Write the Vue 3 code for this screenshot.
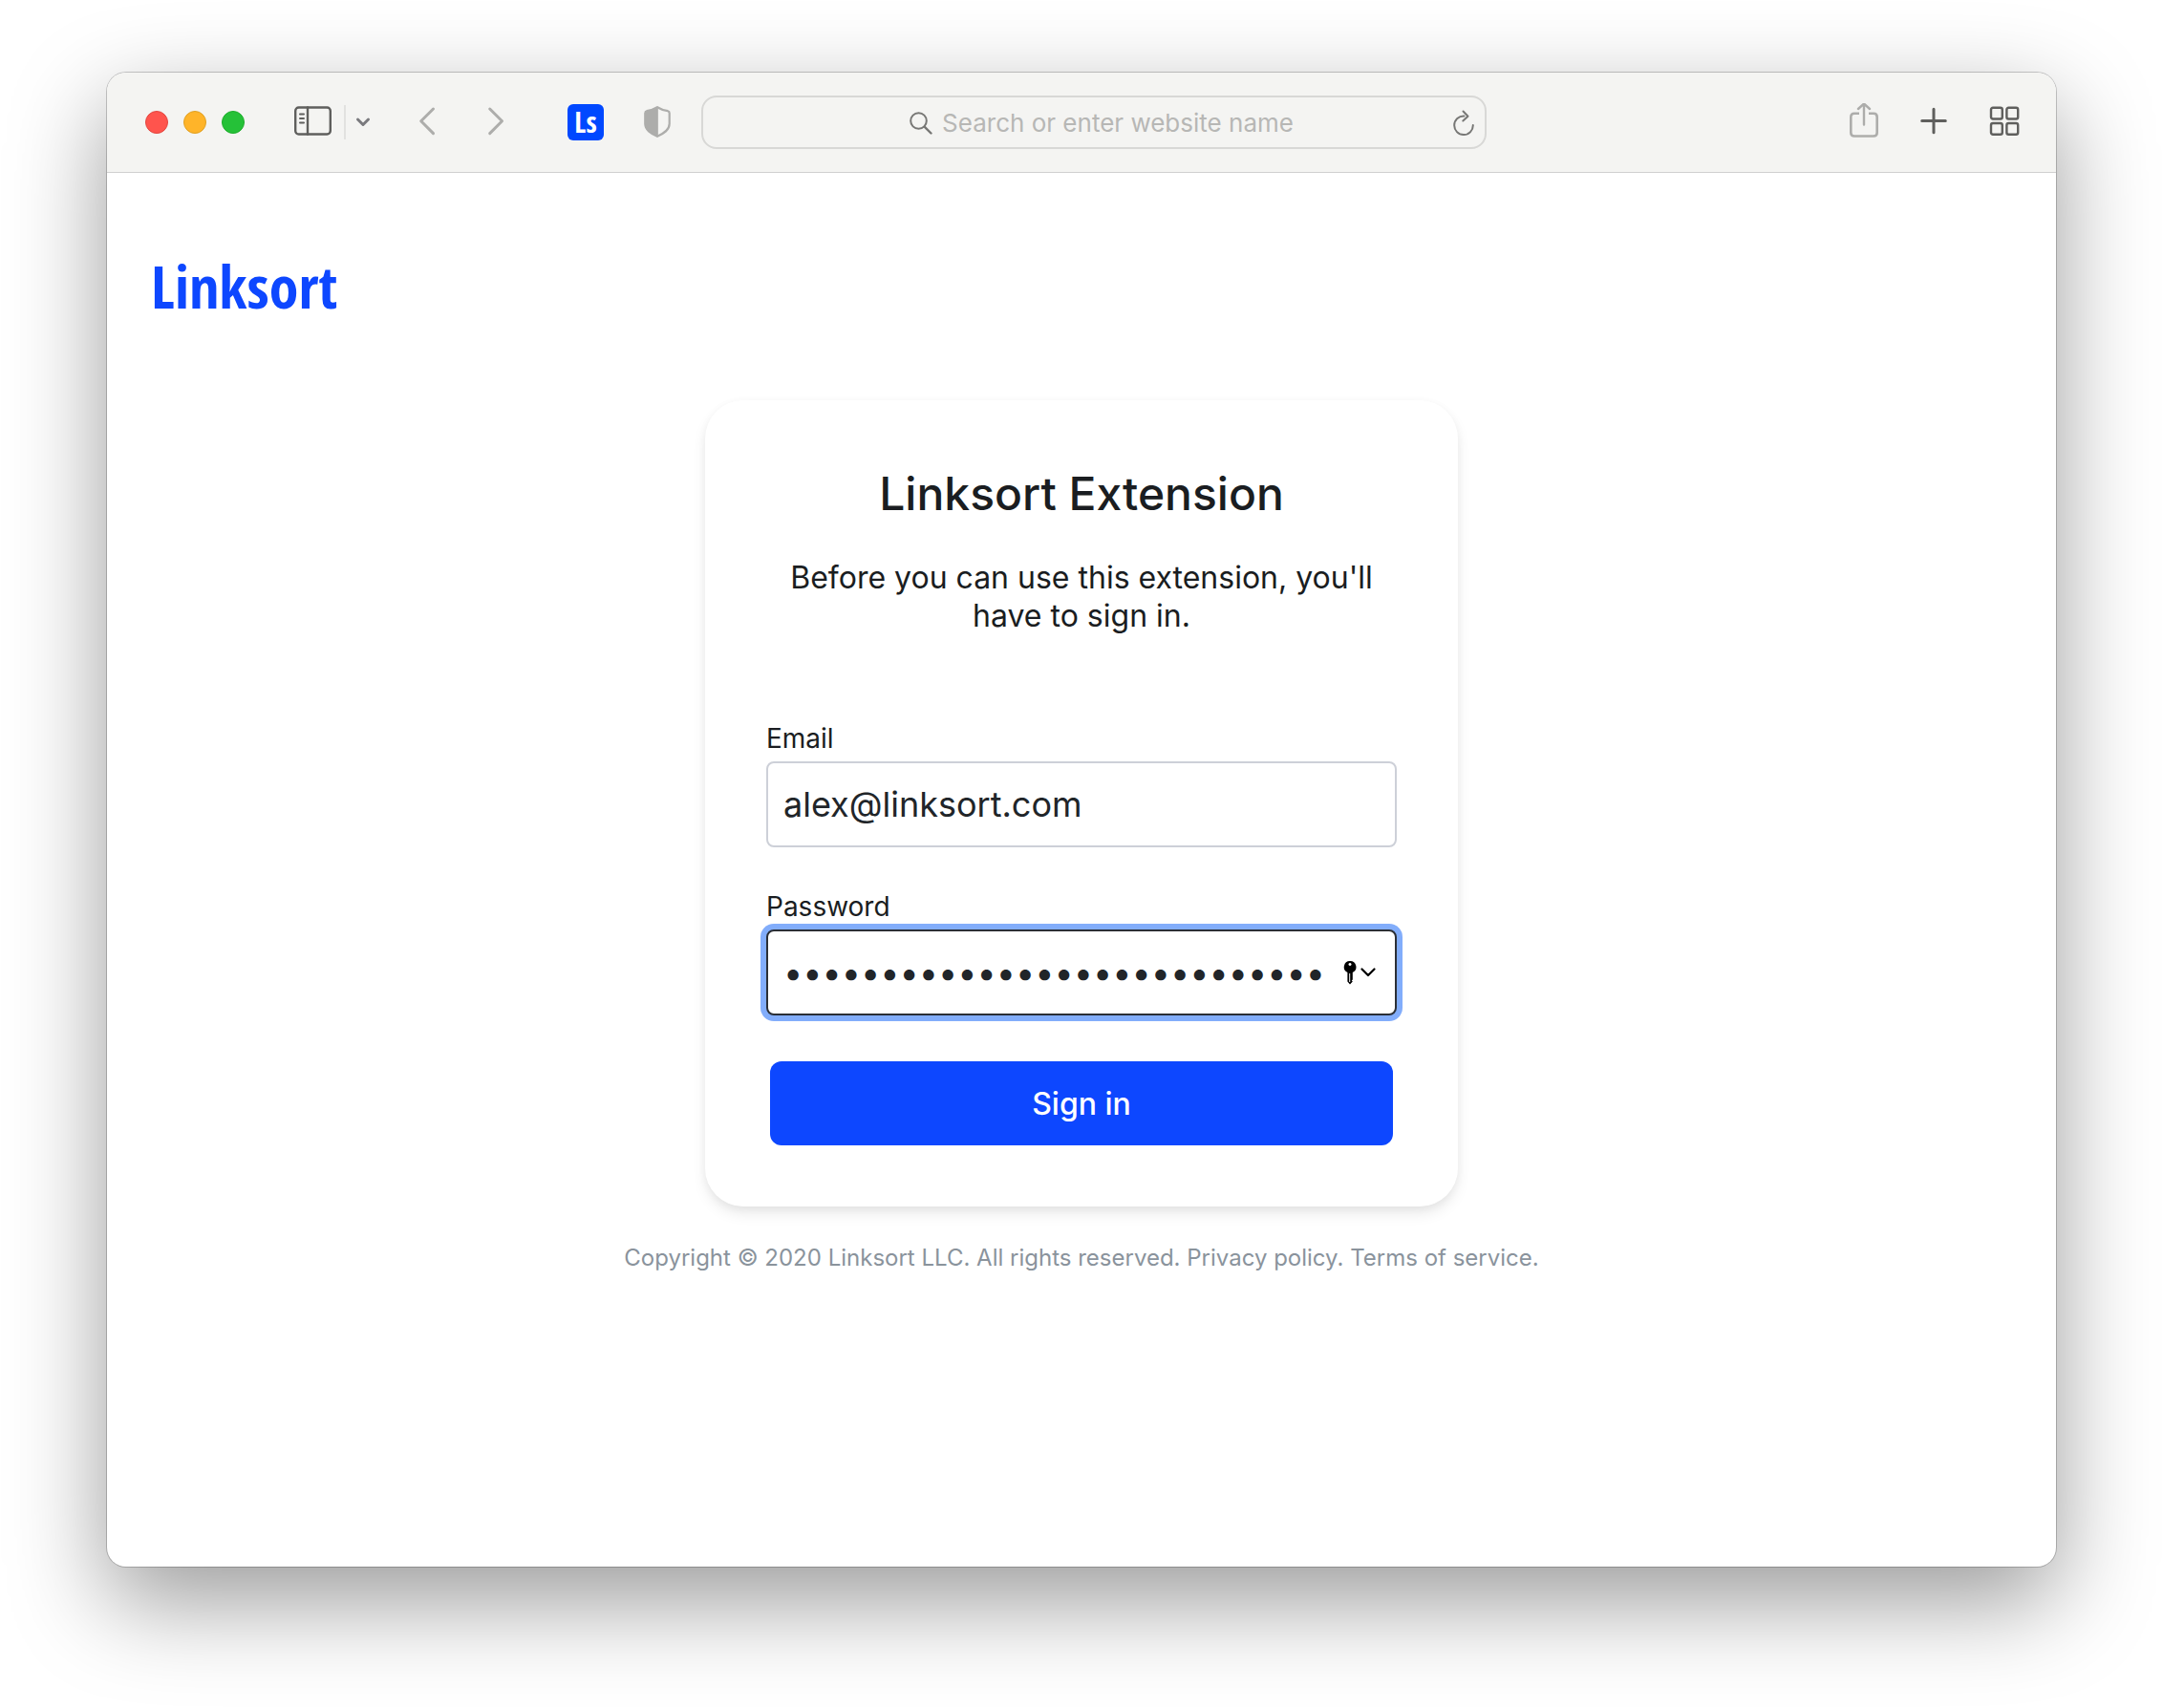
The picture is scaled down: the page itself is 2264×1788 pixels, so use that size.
<script setup>
import { ref } from 'vue'

const address = ref('')
const email = ref('alex@linksort.com')
const password = ref('correct-horse-battery-staple')
</script>

<template>
  <div class="desktop">
    <div class="window">
      <header class="toolbar">
        <div class="lights">
          <button type="button" class="light close" aria-label="Close"></button>
          <button type="button" class="light minimize" aria-label="Minimize"></button>
          <button type="button" class="light zoom" aria-label="Zoom"></button>
        </div>

        <div class="sidebar-group">
          <button type="button" class="tool dark" aria-label="Show sidebar">
            <svg width="40" height="40" viewBox="0 0 40 40">
              <rect x="1.2" y="4.5" width="36.600" height="28" rx="3.500" stroke-width="2.400" />
              <path d="M14 4.500V32.500" stroke-width="2.400" />
              <path d="M6 11.500h4M6 16h4M6 20.500h4" stroke-width="2" />
            </svg>
          </button>
          <span class="divider"></span>
          <button type="button" class="tool slate" aria-label="Sidebar options">
            <svg width="16" height="40" viewBox="0 0 16 40">
              <path d="M2.500 17L8 22.500l5.500-5.500" stroke-width="3" />
            </svg>
          </button>
        </div>

        <div class="history">
          <button type="button" class="tool light-gray" aria-label="Back">
            <svg width="18" height="40" viewBox="0 0 18 40">
              <path d="M15.500 6L2.700 18.800 15.500 31.600" stroke-width="3" />
            </svg>
          </button>
          <button type="button" class="tool light-gray" aria-label="Forward">
            <svg width="18" height="40" viewBox="0 0 18 40">
              <path d="M2.700 6L15.500 18.800 2.700 31.600" stroke-width="3" />
            </svg>
          </button>
        </div>

        <div class="extensions">
          <button type="button" class="extension" aria-label="Linksort extension">Ls</button>
          <button type="button" class="tool light-gray" aria-label="Privacy report">
            <svg width="28" height="40" viewBox="0 0 28 40">
              <path d="M14 4.200C10.500 6.400 6.500 7.600 3 8.200Q1.300 8.600 1.300 10.400V21.500C1.300 28 7 31.500 14 34.800C21 31.500 26.700 28 26.700 21.500V10.400Q26.700 8.600 25 8.200C21.500 7.600 17.500 6.400 14 4.200Z" stroke-width="2.200" />
              <path class="solid" d="M14 4.200C10.500 6.400 6.500 7.600 3 8.200Q1.300 8.600 1.300 10.400V21.500C1.300 28 7 31.500 14 34.800Z" />
            </svg>
          </button>
        </div>

        <div class="address">
          <label class="search">
            <svg width="24" height="24" viewBox="0 0 24 24">
              <circle cx="9.500" cy="9.500" r="8.300" stroke-width="2" />
              <path d="M15.600 15.600L22.500 22.500" stroke-width="2.400" />
            </svg>
            <input v-model="address" type="text" placeholder="Search or enter website name" aria-label="Search or enter website name">
          </label>
          <button type="button" class="tool gray" aria-label="Reload">
            <svg width="24" height="28" viewBox="0 0 24 28">
              <path d="M12.500 6.500A9.800 9.800 0 1 0 21.800 16" stroke-width="2" />
              <path d="M11.500 1.500L16.500 6.700L11.300 11.500" stroke-width="2" />
            </svg>
          </button>
        </div>

        <div class="actions">
          <button type="button" class="tool light-gray" aria-label="Share">
            <svg width="30" height="40" viewBox="0 0 30 40">
              <path d="M10 10.800H5Q1.300 10.800 1.300 14.500V31Q1.300 34.500 5 34.500H25Q28.700 34.500 28.700 31V14.500Q28.700 10.800 25 10.800H20" stroke-width="2.600" stroke-linecap="butt" />
              <path d="M15 22.500V1.200M9 6L15 .500L21 6" stroke-width="2.400" />
            </svg>
          </button>
          <button type="button" class="tool dark" aria-label="New tab">
            <svg width="28" height="40" viewBox="0 0 28 40">
              <path d="M14 6.200V30.800M1.700 18.500H26.300" stroke-width="3" />
            </svg>
          </button>
          <button type="button" class="tool dark" aria-label="Tab overview">
            <svg width="32" height="40" viewBox="0 0 32 40">
              <rect x="2" y="4.700" width="11.800" height="11.800" rx="2" stroke-width="2.400" />
              <rect x="18.400" y="4.700" width="11.800" height="11.800" rx="2" stroke-width="2.400" />
              <rect x="2" y="21" width="11.800" height="11.800" rx="2" stroke-width="2.400" />
              <rect x="18.400" y="21" width="11.800" height="11.800" rx="2" stroke-width="2.400" />
            </svg>
          </button>
        </div>
      </header>

      <main class="page">
        <a class="logo" href="#">Linksort</a>

        <section class="card">
          <h1>Linksort Extension</h1>
          <p class="intro">Before you can use this extension, you'll have to sign in.</p>
          <form @submit.prevent>
            <div class="field">
              <label for="email">Email</label>
              <input id="email" v-model="email" type="email" autocomplete="email">
            </div>
            <div class="field">
              <label for="password">Password</label>
              <div class="password">
                <input id="password" v-model="password" class="focused" type="password" autocomplete="current-password">
                <button type="button" class="autofill" aria-label="Choose a saved password">
                  <svg width="34" height="26" viewBox="0 0 34 26">
                    <path fill="#000" fill-rule="evenodd" d="M7 1a6.300 6.300 0 0 1 2.800 12V20.500l-1 1 1 1L7 25.500 4.400 22.500V13A6.300 6.300 0 0 1 7 1ZM7 2.900a1.500 1.500 0 1 0 .01 0ZM6.200 14v9h1v-9Z" />
                    <path d="M19.500 9.500L26 16l6.500-6.500" fill="none" stroke="#000" stroke-width="2.200" stroke-linecap="round" stroke-linejoin="round" />
                  </svg>
                </button>
              </div>
            </div>
            <button type="submit" class="submit">Sign in</button>
          </form>
        </section>

        <footer class="legal">
          Copyright © 2020 Linksort LLC. All rights reserved.
          <a href="#">Privacy policy.</a> <a href="#">Terms of service.</a>
        </footer>
      </main>
    </div>
  </div>
</template>

<style>
body {
  margin: 0;
  background: #fff;
}
</style>

<style scoped>
.desktop {
  box-sizing: border-box;
  min-height: 100vh;
  padding: 76px 112px 148px;
  display: flex;
  overflow: hidden;
  font-family: Inter, "Liberation Sans", sans-serif;
  color: #1a1d21;
}

.window {
  flex: 1;
  min-width: 0;
  display: flex;
  flex-direction: column;
  border-radius: 20px;
  background: #fff;
  box-shadow: 0 0 0 1px rgba(0, 0, 0, 0.2), 0 36px 100px rgba(0, 0, 0, 0.4);
}

button {
  padding: 0;
  border: 0;
  background: none;
  font-family: inherit;
  cursor: pointer;
}

a {
  color: inherit;
  text-decoration: none;
}

svg {
  display: block;
}

.toolbar {
  display: flex;
  align-items: center;
  height: 104px;
  padding: 0 38px 0 40px;
  border-bottom: 1px solid #d0d0d0;
  border-radius: 20px 20px 0 0;
  background: #f4f4f2;
}

.lights {
  display: flex;
  gap: 16px;
}

.light {
  box-sizing: border-box;
  width: 24px;
  height: 24px;
  border-radius: 50%;
}

.close {
  border: 1px solid #e2463f;
  background: #ff544d;
}

.minimize {
  border: 1px solid #dfa023;
  background: #ffb429;
}

.zoom {
  border: 1px solid #1dad2b;
  background: #25c138;
}

.tool svg {
  fill: none;
  stroke: currentColor;
  stroke-linecap: round;
  stroke-linejoin: round;
}

.tool .solid {
  fill: currentColor;
}

.dark {
  color: #5f5f5d;
}

.slate {
  color: #7a7a7e;
}

.gray {
  color: #777775;
}

.light-gray {
  color: #adadab;
}

.sidebar-group {
  display: flex;
  align-items: center;
  margin-left: 52px;
}

.divider {
  width: 2px;
  height: 36px;
  margin: 0 10px 0 12px;
  background: #e2e2e0;
}

.history {
  display: flex;
  gap: 54px;
  margin-left: 50px;
}

.extensions {
  display: flex;
  align-items: center;
  gap: 42px;
  margin-left: 66px;
}

.extension {
  width: 38px;
  height: 38px;
  border-radius: 6px;
  background: #0048ff;
  color: #fff;
  font: bold 30px/38px "Open Sans Condensed", "Roboto Condensed", Lato, sans-serif;
}

.address {
  box-sizing: border-box;
  flex: 0 1 822px;
  min-width: 0;
  height: 56px;
  display: flex;
  align-items: center;
  margin-left: 32px;
  padding: 2px 10px 0 50px;
  border: 2px solid #d8d8d6;
  border-radius: 16px;
}

.search {
  display: flex;
  align-items: center;
  gap: 10px;
  margin: 0 auto;
  color: #777775;
}

.search svg {
  fill: none;
  stroke: currentColor;
  stroke-linecap: round;
}

.search input {
  field-sizing: content;
  padding: 0;
  border: 0;
  outline: 0;
  background: none;
  color: #1a1d21;
  font: 26px/32px Inter, "Liberation Sans", sans-serif;
}

.search input::placeholder {
  color: #b7b7b5;
  opacity: 1;
}

.actions {
  display: flex;
  align-items: center;
  gap: 44px;
  margin-left: auto;
}

.page {
  flex: 1;
  display: flex;
  flex-direction: column;
  align-items: center;
  padding: 76px 46px;
}

.logo {
  align-self: flex-start;
  color: #0d47ff;
  font: bold 62px/84px "Open Sans Condensed", "Roboto Condensed", Lato, sans-serif;
}

.card {
  box-sizing: border-box;
  width: 100%;
  max-width: 788px;
  margin-top: 78px;
  padding: 64px;
  border-radius: 40px;
  background: #fff;
  box-shadow: 0 8px 16px -2px rgba(0, 0, 0, 0.1), 0 2px 10px rgba(0, 0, 0, 0.04);
}

h1 {
  margin: 6px 0 40px;
  font-size: 48px;
  font-weight: 500;
  line-height: 56px;
  text-align: center;
}

.intro {
  margin: 0 0 90px;
  font-size: 32px;
  line-height: 40px;
  text-align: center;
}

form {
  display: flex;
  flex-direction: column;
}

.field {
  display: flex;
  flex-direction: column;
  margin-bottom: 44px;
}

.field label {
  margin-bottom: 6px;
  font-size: 28px;
  line-height: 36px;
}

.field input {
  box-sizing: border-box;
  width: 100%;
  height: 90px;
  padding: 0 16px;
  border: 2px solid #cdd0d8;
  border-radius: 8px;
  outline: 0;
  background: #fff;
  color: #212529;
  font: 36px/48px Inter, "Liberation Sans", sans-serif;
}

.password {
  position: relative;
}

.field input.focused {
  padding-right: 60px;
  border-color: #2b2f36;
  box-shadow: 0 0 0 6px #82adfb;
}

.autofill {
  position: absolute;
  top: 32px;
  right: 22px;
}

.submit {
  height: 88px;
  margin: 4px 4px 0;
  border-radius: 12px;
  background: #0d47ff;
  color: #fff;
  font-size: 32px;
  font-weight: 500;
}

.legal {
  margin-top: 36px;
  color: #8a939c;
  font-size: 24px;
  line-height: 36px;
  text-align: center;
}
</style>
